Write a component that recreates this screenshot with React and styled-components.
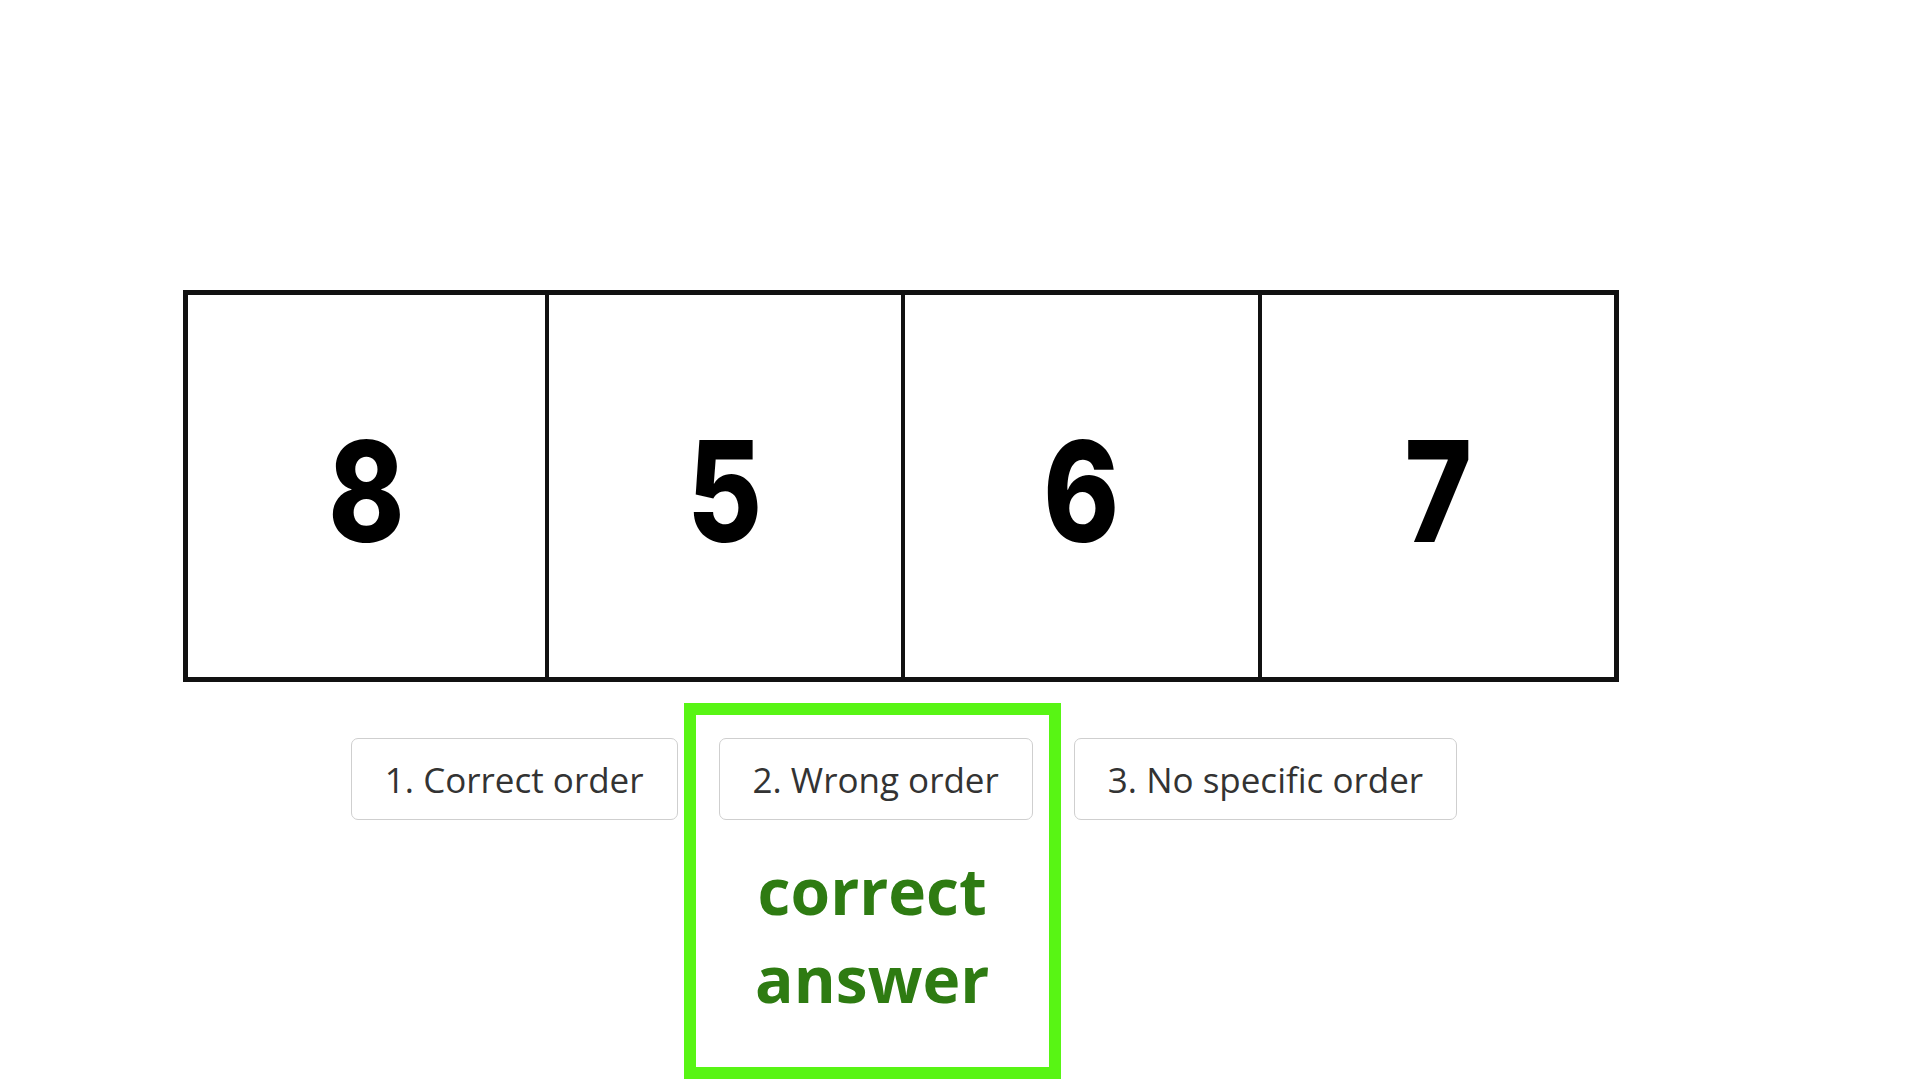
import React from "react";
import styled, { createGlobalStyle } from "styled-components";

const Global = createGlobalStyle`
  html, body {
    margin: 0;
    padding: 0;
    background: #ffffff;
    overflow: hidden;
  }
  * { box-sizing: border-box; }
`;

const Page = styled.main`
  width: 1920px;
  height: 1080px;
  padding: 290px 0 0 183px;
  display: flex;
  flex-direction: column;
  font-family: "Open Sans", "Liberation Sans", sans-serif;
`;

const Sequence = styled.div`
  width: 1436px;
  height: 392px;
  border: 5px solid #111111;
  display: grid;
  grid-template-columns: repeat(4, 1fr);
`;

const Cell = styled.div`
  display: flex;
  align-items: center;
  justify-content: center;
  padding-top: 10px;
  border-left: ${(p) => (p.$first ? "none" : "4px solid #111111")};
`;

const Digit = styled.span`
  display: inline-block;
  font-family: Inter, "Liberation Sans", sans-serif;
  font-weight: 800;
  font-size: 140px;
  line-height: 1;
  color: #000000;
  transform: scaleX(0.82);
`;

const Options = styled.div`
  width: 1436px;
  margin-top: 56px;
  padding-left: 6px;
  display: flex;
  justify-content: center;
  gap: 41px;
`;

const Slot = styled.div`
  position: relative;
`;

const OptionButton = styled.button`
  height: 82px;
  padding: 0 33px;
  background: #ffffff;
  border: 1.5px solid #cfcfcf;
  border-radius: 7px;
  font-family: "Open Sans", "Liberation Sans", sans-serif;
  font-size: 35px;
  font-weight: 400;
  color: #333333;
  white-space: nowrap;
  cursor: pointer;
`;

const Highlight = styled.div`
  position: absolute;
  top: -35px;
  left: -35px;
  right: -28px;
  height: 376px;
  border: 12px solid #58f514;
  padding-top: 132px;
  text-align: center;
  pointer-events: none;
`;

const AnswerNote = styled.div`
  font-family: "Open Sans", "Liberation Sans", sans-serif;
  font-weight: 700;
  font-size: 64px;
  line-height: 88px;
  color: #2e7b12;
`;

const digits = ["8", "5", "6", "7"];
const options = [
  { label: "1. Correct order" },
  { label: "2. Wrong order", correct: true },
  { label: "3. No specific order" },
];

export default function App() {
  return (
    <>
      <Global />
      <Page>
        <Sequence>
          {digits.map((d, i) => (
            <Cell key={i} $first={i === 0}>
              <Digit>{d}</Digit>
            </Cell>
          ))}
        </Sequence>
        <Options>
          {options.map((o) => (
            <Slot key={o.label}>
              <OptionButton>{o.label}</OptionButton>
              {o.correct && (
                <Highlight>
                  <AnswerNote>
                    correct
                    <br />
                    answer
                  </AnswerNote>
                </Highlight>
              )}
            </Slot>
          ))}
        </Options>
      </Page>
    </>
  );
}
